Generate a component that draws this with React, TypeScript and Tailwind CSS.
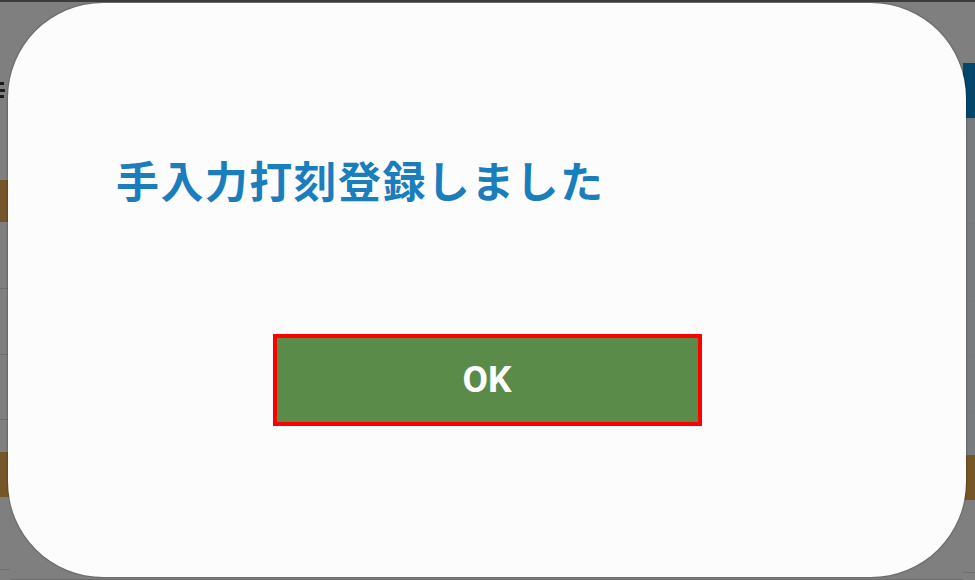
import React from "react";

export default function App() {
  return (
    <div className="relative w-[975px] h-[580px] overflow-hidden bg-[#7f7f7f]">
      {/* dimmed page behind */}
      <div className="flex h-full w-full flex-col">
        <div className="h-[2px] bg-[#3c3c3c]" />
        <div className="flex flex-1">
          <div className="flex w-[10px] flex-col">
            <div className="h-[80px]" />
            <div className="flex h-[16px] w-[5px] flex-col justify-between">
              <div className="h-[3px] w-[4px] bg-[#1a1a1a]" />
              <div className="h-[3px] w-[5px] bg-[#1a1a1a]" />
              <div className="h-[3px] w-[4px] bg-[#1a1a1a]" />
            </div>
            <div className="h-[82px]" />
            <div className="h-[42px] bg-[#755628]" />
            <div className="h-[67px] border-b border-[#6e6e6e]" />
            <div className="h-[66px] border-b border-[#6e6e6e]" />
            <div className="h-[65px] border-b border-[#6e6e6e]" />
            <div className="h-[32px]" />
            <div className="h-[45px] bg-[#755628]" />
            <div className="h-[73px] border-b border-[#6e6e6e]" />
          </div>
          <div className="flex-1 flex flex-col">
            <div className="flex-1" />
            <div className="h-[73px] border-b border-[#6e6e6e]" />
          </div>
          <div className="flex w-[12px] flex-col">
            <div className="h-[61px]" />
            <div className="h-[55px] bg-[#03466b]" />
            <div className="h-[106px] border-b border-[#76797c] bg-[#797c7f]" />
            <div className="h-[78px] border-b border-[#76797c] bg-[#797c7f]" />
            <div className="h-[55px] border-b border-[#76797c] bg-[#797c7f]" />
            <div className="h-[56px] border-b border-[#76797c] bg-[#797c7f]" />
            <div className="h-[42px] bg-[#797c7f]" />
            <div className="h-[45px] bg-[#755628]" />
            <div className="h-[73px] border-b border-[#6e6e6e]" />
          </div>
        </div>
      </div>

      {/* dialog */}
      <div
        className="absolute left-[8px] top-[3px] right-[9px] bottom-[3px] flex flex-col items-stretch rounded-[95px] bg-[#fcfcfc] shadow-[0_0_2px_rgba(0,0,0,0.6)]"
        style={{ fontFamily: '"Noto Sans CJK JP", "Noto Sans", sans-serif' }}
      >
        <div className="pl-[108px] pt-[152px] text-[43px] leading-[48px] font-bold tracking-[1.4px] text-[#1a7dbc]">
          手入力打刻登録しました
        </div>
        <div className="flex justify-center pt-[131px]">
          <button
            className="flex h-[92px] w-[429px] items-center justify-center border-[4px] border-[#ff0000] bg-[#5a8b48] text-[37px] font-bold text-white"
            style={{ fontFamily: 'Roboto, "Liberation Sans", sans-serif' }}
          >
            OK
          </button>
        </div>
      </div>
    </div>
  );
}
